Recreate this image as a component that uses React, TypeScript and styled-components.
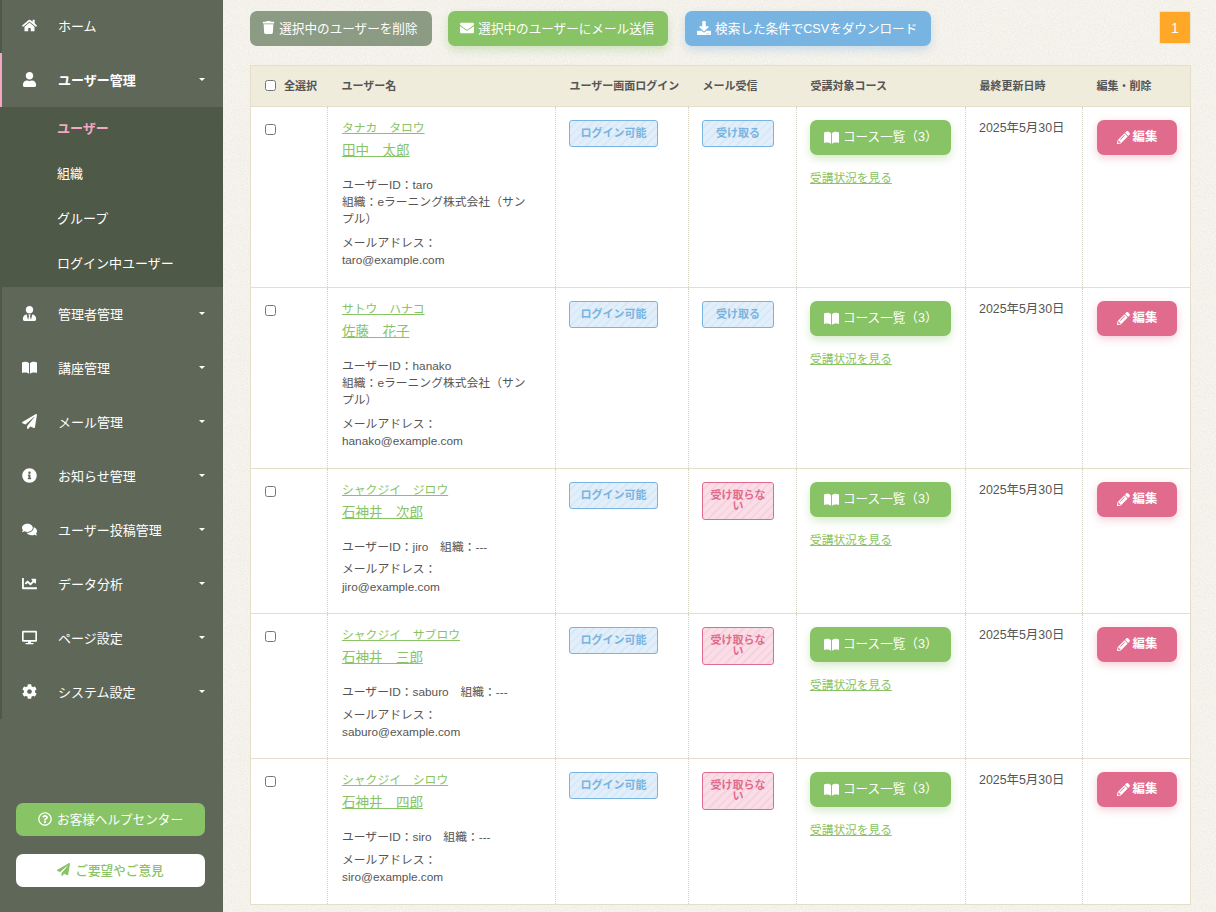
import React from 'react';
import styled, { createGlobalStyle, css } from 'styled-components';
import {
  FaChartLine,
  FaCog,
  FaComments,
  FaDesktop,
  FaDownload,
  FaEnvelope,
  FaHome,
  FaInfoCircle,
  FaPaperPlane,
  FaPencilAlt,
  FaRegQuestionCircle,
  FaTrash,
  FaUser,
  FaUserTie,
} from 'react-icons/fa';

const GREEN = '#88c365';
const PINK = '#e16b8c';
const BLUE = '#78b4e1';

// paper-like noise behind the page
const paper =
  "data:image/svg+xml,%3Csvg xmlns='http://www.w3.org/2000/svg' width='200' height='200'%3E%3Cfilter id='n'%3E%3CfeTurbulence type='fractalNoise' baseFrequency='0.7' numOctaves='3' stitchTiles='stitch'/%3E%3CfeColorMatrix values='0 0 0 0 0.6 0 0 0 0 0.56 0 0 0 0 0.45 0 0 0 0.35 -0.06'/%3E%3C/filter%3E%3Crect width='200' height='200' filter='url(%23n)'/%3E%3C/svg%3E";

const GlobalStyle = createGlobalStyle`
  html, body {
    margin: 0;
    padding: 0;
    height: 912px;
    overflow: hidden;
  }
  body {
    font-family: "Liberation Sans", "Noto Sans CJK JP", sans-serif;
    color: #555;
    background-color: #f9f7f2;
    background-image: url("${paper}");
  }
`;

const Page = styled.div`
  display: flex;
  height: 912px;
`;

const Sidebar = styled.aside`
  width: 223px;
  flex: none;
  background: #5f6858;
  display: flex;
  flex-direction: column;
  padding-bottom: 25px;
  box-sizing: border-box;
`;

const Nav = styled.nav`
  border-left: 2px solid #4f5947;
`;

const NavItem = styled.div<{ $active?: boolean }>`
  height: 54px;
  box-sizing: border-box;
  display: flex;
  align-items: center;
  color: #fff;
  font-size: 13px;
  padding: 0 18px 2px 0;
  margin-left: ${(p) => (p.$active ? '-2px' : '0')};
  border-left: ${(p) => (p.$active ? '2px solid #f4a6c4' : 'none')};
  font-weight: ${(p) => (p.$active ? 700 : 400)};
  &:first-child {
    height: 53px;
  }
`;

const NavIcon = styled.span`
  width: 56px;
  flex: none;
  display: flex;
  justify-content: center;
  font-size: 15px;
  padding-right: 2px;
  box-sizing: border-box;
`;

const Caret = styled.i`
  margin-left: auto;
  width: 0;
  height: 0;
  border-left: 3px solid transparent;
  border-right: 3px solid transparent;
  border-top: 3px solid #fff;
`;

const SubNav = styled.div`
  background: #4f5947;
  margin-left: -2px;
`;

const SubItem = styled.div<{ $current?: boolean }>`
  height: 45px;
  box-sizing: border-box;
  display: flex;
  align-items: center;
  padding: 0 0 5px 57px;
  font-size: 13px;
  color: ${(p) => (p.$current ? '#f4a6c4' : '#fff')};
  font-weight: ${(p) => (p.$current ? 700 : 400)};
`;

const SideButtons = styled.div`
  margin-top: auto;
  padding: 0 18px 0 16px;
  display: flex;
  flex-direction: column;
  gap: 18px;
`;

const SideButton = styled.a<{ $light?: boolean }>`
  height: 33px;
  box-sizing: border-box;
  padding-bottom: 2px;
  border-radius: 7px;
  display: flex;
  align-items: center;
  justify-content: center;
  gap: 5px;
  font-size: 12.6px;
  background: ${(p) => (p.$light ? '#fff' : GREEN)};
  color: ${(p) => (p.$light ? GREEN : '#fff')};
  font-weight: ${(p) => (p.$light ? 500 : 400)};
`;

const Main = styled.main`
  flex: 1;
  padding: 11px 25px 0 27px;
  min-width: 0;
`;

const Toolbar = styled.div`
  display: flex;
  align-items: flex-start;
  gap: 16.5px;
  margin-bottom: 19px;
`;

const ActionButton = styled.button<{ $bg: string; $shadow?: boolean }>`
  height: 35px;
  padding: 0 14px 2px 12.25px;
  border: none;
  border-radius: 7px;
  display: flex;
  align-items: center;
  gap: 4px;
  font-family: inherit;
  font-size: 12.6px;
  color: #fff;
  background: ${(p) => p.$bg};
  ${(p) =>
    p.$shadow &&
    css`
      box-shadow: 0 4px 8px ${p.$bg}55;
    `}
`;

const PageNumber = styled.span`
  margin-left: auto;
  width: 32px;
  height: 33px;
  box-sizing: border-box;
  border: 1px solid #e8e4d2;
  border-radius: 2px;
  background: #ffa726;
  color: #fff;
  font-size: 14px;
  display: flex;
  align-items: center;
  justify-content: center;
`;

const Table = styled.table`
  width: 940px;
  table-layout: fixed;
  border-collapse: collapse;
  background: #fff;
  border: 1px solid #e3dfcb;
`;

const HeadCell = styled.th<{ $width: number }>`
  width: ${(p) => p.$width}px;
  height: 41px;
  box-sizing: border-box;
  padding: 0 0 2px 14px;
  background: #efecdc;
  border-bottom: 1px solid #e3dfcb;
  text-align: left;
  font-size: 11px;
  font-weight: 700;
  color: #555;
  white-space: nowrap;
`;

const SelectAll = styled.label`
  display: flex;
  align-items: center;
  gap: 8px;
`;

const Check = styled.input.attrs({ type: 'checkbox' })`
  margin: 0;
  width: 11px;
  height: 11px;
  display: block;
`;

const Row = styled.tr`
  border-bottom: 1px solid #e3dfcb;
`;

const Cell = styled.td`
  padding: 13px 12px 17.3px 13px;
  vertical-align: top;
  border-left: 1px dotted #d5d2c2;
  font-size: 11.8px;
  line-height: 17.2px;
  &:first-child {
    border-left: none;
    padding: 17px 0 0 14px;
  }
`;

const UserCell = styled(Cell)`
  padding-left: 14px;
  padding-right: 24px;
`;

const NameLink = styled.a<{ $kana?: boolean }>`
  display: block;
  width: fit-content;
  font-size: ${(p) => (p.$kana ? '11.8px' : '13.5px')};
  line-height: ${(p) => (p.$kana ? '17px' : '24px')};
  margin-bottom: ${(p) => (p.$kana ? '2px' : '0')};
  color: ${GREEN};
  text-decoration: underline;
`;

const Names = styled.div`
  margin-bottom: 14px;
`;

const DetailLine = styled.div<{ $gap?: number }>`
  margin-top: ${(p) => p.$gap ?? 0}px;
`;

const Badge = styled.span<{ $tone: 'blue' | 'pink'; $width: number }>`
  display: block;
  box-sizing: border-box;
  width: ${(p) => p.$width}px;
  padding: 7px 5px;
  border-radius: 3px;
  text-align: center;
  font-size: 11px;
  line-height: 11px;
  font-weight: 700;
  ${(p) =>
    p.$tone === 'blue'
      ? css`
          color: ${BLUE};
          border: 1px solid ${BLUE};
          background: repeating-linear-gradient(135deg, #e2eef9 0 4px, #d7e8f6 4px 6px);
        `
      : css`
          color: ${PINK};
          border: 1px solid ${PINK};
          background: repeating-linear-gradient(135deg, #fadde6 0 4px, #f5d3de 4px 6px);
        `}
`;

const CourseButton = styled.a`
  width: 141px;
  height: 35px;
  border-radius: 7px;
  background: ${GREEN};
  box-shadow: 0 4px 8px ${GREEN}55;
  color: #fff;
  font-size: 12.6px;
  display: flex;
  align-items: center;
  gap: 4px;
  padding-left: 14px;
  box-sizing: border-box;
  margin-bottom: 14px;
`;

const StatusLink = styled.a`
  color: ${GREEN};
  text-decoration: underline;
  font-size: 11.7px;
  display: block;
`;

const DateText = styled.div`
  font-size: 12.4px;
  line-height: 16px;
`;

const EditButton = styled.a`
  width: 80px;
  height: 35px;
  border-radius: 7px;
  background: ${PINK};
  box-shadow: 0 3px 8px ${PINK}55;
  color: #fff;
  font-size: 12.4px;
  font-weight: 700;
  display: flex;
  align-items: center;
  justify-content: center;
  gap: 3px;
`;

const EditCell = styled(Cell)`
  padding-left: 14px;
`;

const BookIcon = ({ size = 15 }: { size?: number }) => (
  <svg width={size} height={size} viewBox="0 0 16 16" fill="currentColor">
    <path d="M0 2.6C2.6 1.6 5.6 1.8 7.5 3.4V14.6C5.6 13.2 2.6 13 0 13.8Z" />
    <path d="M16 2.6C13.4 1.6 10.4 1.8 8.5 3.4V14.6C10.4 13.2 13.4 13 16 13.8Z" />
  </svg>
);

const navItems = [
  { icon: <FaHome />, label: 'ホーム', caret: false },
  { icon: <FaUser />, label: 'ユーザー管理', caret: true, active: true },
  { icon: <FaUserTie />, label: '管理者管理', caret: true },
  { icon: <BookIcon />, label: '講座管理', caret: true },
  { icon: <FaPaperPlane />, label: 'メール管理', caret: true },
  { icon: <FaInfoCircle />, label: 'お知らせ管理', caret: true },
  { icon: <FaComments />, label: 'ユーザー投稿管理', caret: true },
  { icon: <FaChartLine />, label: 'データ分析', caret: true },
  { icon: <FaDesktop />, label: 'ページ設定', caret: true },
  { icon: <FaCog />, label: 'システム設定', caret: true },
];

const subItems = ['ユーザー', '組織', 'グループ', 'ログイン中ユーザー'];

const users = [
  { kana: 'タナカ　タロウ', name: '田中　太郎', id: 'taro', org: 'eラーニング株式会社（サンプル）', mail: true },
  { kana: 'サトウ　ハナコ', name: '佐藤　花子', id: 'hanako', org: 'eラーニング株式会社（サンプル）', mail: true },
  { kana: 'シャクジイ　ジロウ', name: '石神井　次郎', id: 'jiro', org: '', mail: false },
  { kana: 'シャクジイ　サブロウ', name: '石神井　三郎', id: 'saburo', org: '', mail: false },
  { kana: 'シャクジイ　シロウ', name: '石神井　四郎', id: 'siro', org: '', mail: false },
];

const columns = [
  { width: 77, label: '' },
  { width: 228, label: 'ユーザー名' },
  { width: 133, label: 'ユーザー画面ログイン' },
  { width: 108, label: 'メール受信' },
  { width: 169, label: '受講対象コース' },
  { width: 117, label: '最終更新日時' },
  { width: 108, label: '編集・削除' },
];

export default function App() {
  return (
    <Page>
      <GlobalStyle />
      <Sidebar>
        <Nav>
          {navItems.map((item) => (
            <React.Fragment key={item.label}>
              <NavItem $active={item.active}>
                <NavIcon>{item.icon}</NavIcon>
                {item.label}
                {item.caret && <Caret />}
              </NavItem>
              {item.active && (
                <SubNav>
                  {subItems.map((sub, i) => (
                    <SubItem key={sub} $current={i === 0}>
                      {sub}
                    </SubItem>
                  ))}
                </SubNav>
              )}
            </React.Fragment>
          ))}
        </Nav>
        <SideButtons>
          <SideButton>
            <FaRegQuestionCircle size={14} />
            お客様ヘルプセンター
          </SideButton>
          <SideButton $light>
            <FaPaperPlane size={13} />
            ご要望やご意見
          </SideButton>
        </SideButtons>
      </Sidebar>
      <Main>
        <Toolbar>
          <ActionButton $bg="#8c9b83">
            <FaTrash size={13} />
            選択中のユーザーを削除
          </ActionButton>
          <ActionButton $bg={GREEN} $shadow>
            <FaEnvelope size={14} />
            選択中のユーザーにメール送信
          </ActionButton>
          <ActionButton $bg={BLUE} $shadow>
            <FaDownload size={14} />
            検索した条件でCSVをダウンロード
          </ActionButton>
          <PageNumber>1</PageNumber>
        </Toolbar>
        <Table>
          <thead>
            <tr>
              {columns.map((col, i) => (
                <HeadCell key={i} $width={col.width}>
                  {i === 0 ? (
                    <SelectAll>
                      <Check />
                      全選択
                    </SelectAll>
                  ) : (
                    col.label
                  )}
                </HeadCell>
              ))}
            </tr>
          </thead>
          <tbody>
            {users.map((user) => (
              <Row key={user.id}>
                <Cell>
                  <Check />
                </Cell>
                <UserCell>
                  <Names>
                    <NameLink $kana>{user.kana}</NameLink>
                    <NameLink>{user.name}</NameLink>
                  </Names>
                  {user.org ? (
                    <>
                      <DetailLine>ユーザーID：{user.id}</DetailLine>
                      <DetailLine>組織：{user.org}</DetailLine>
                    </>
                  ) : (
                    <DetailLine>ユーザーID：{user.id}　組織：---</DetailLine>
                  )}
                  <DetailLine $gap={user.org ? 6.5 : 5.5}>メールアドレス：</DetailLine>
                  <DetailLine>{user.id}@example.com</DetailLine>
                </UserCell>
                <Cell>
                  <Badge $tone="blue" $width={89}>
                    ログイン可能
                  </Badge>
                </Cell>
                <Cell>
                  <Badge $tone={user.mail ? 'blue' : 'pink'} $width={72}>
                    {user.mail ? '受け取る' : '受け取らない'}
                  </Badge>
                </Cell>
                <Cell>
                  <CourseButton>
                    <BookIcon />
                    コース一覧（3）
                  </CourseButton>
                  <StatusLink>受講状況を見る</StatusLink>
                </Cell>
                <Cell>
                  <DateText>2025年5月30日</DateText>
                </Cell>
                <EditCell>
                  <EditButton>
                    <FaPencilAlt size={13} />
                    編集
                  </EditButton>
                </EditCell>
              </Row>
            ))}
          </tbody>
        </Table>
      </Main>
    </Page>
  );
}
